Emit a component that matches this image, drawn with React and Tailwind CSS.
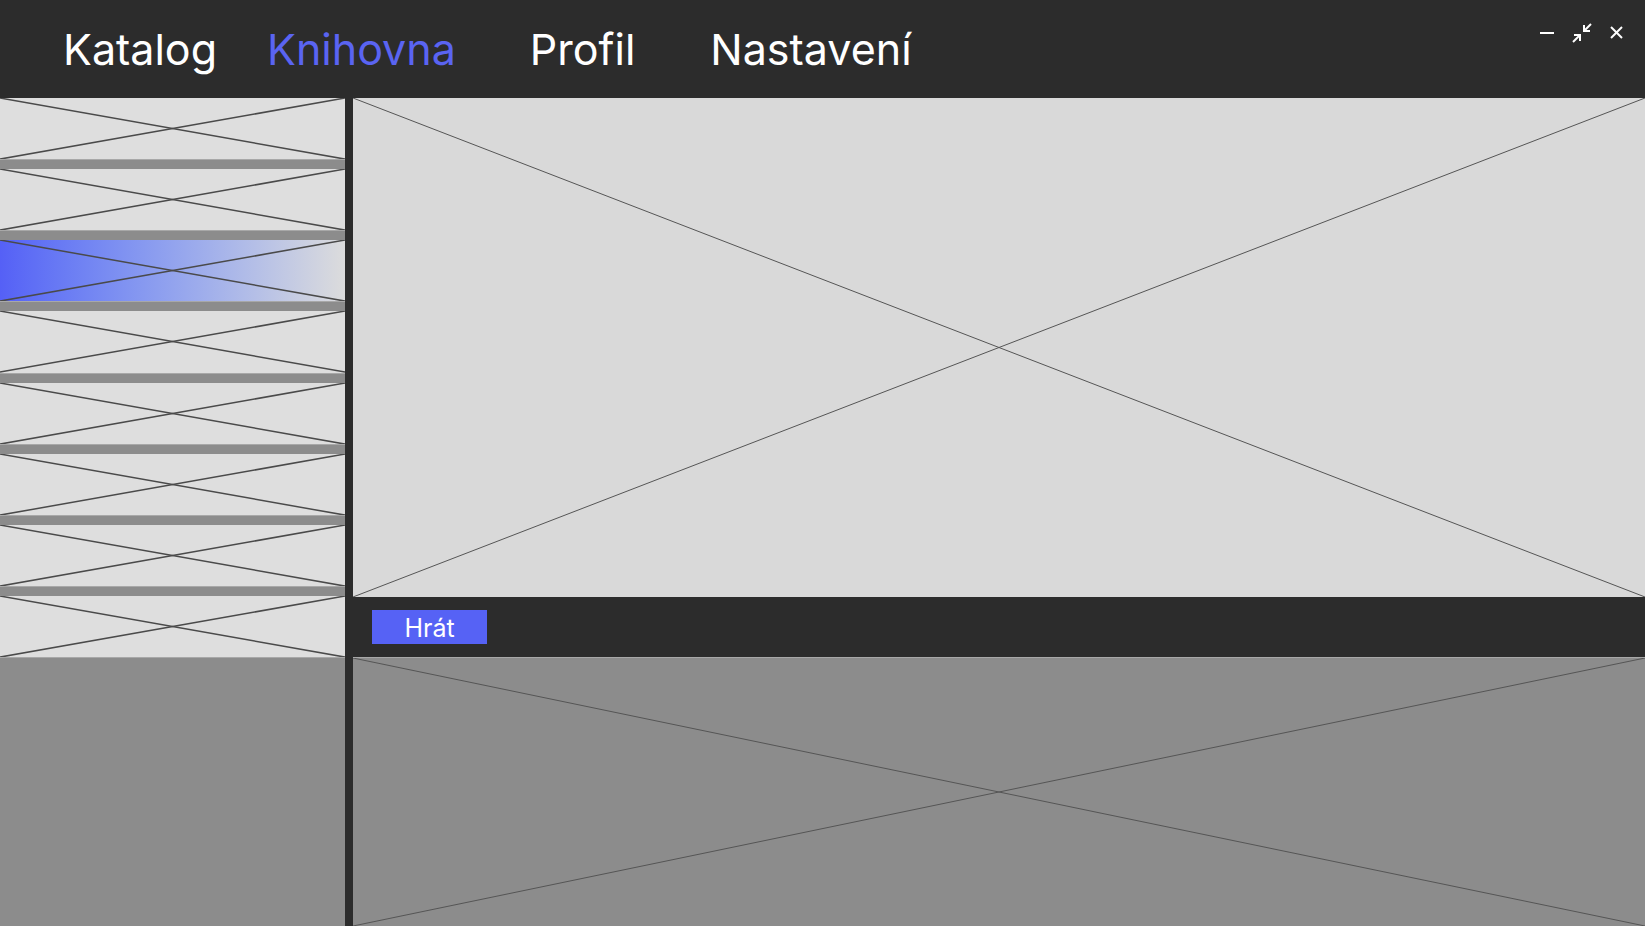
import React from "react";

// Placeholder cross drawn over an image slot
const Cross = ({ stroke = "#555555", width = 1 }) => (
    <svg className="absolute inset-0 w-full h-full" preserveAspectRatio="none" viewBox="0 0 100 100">
        <line x1="0" y1="0" x2="100" y2="100" stroke={stroke} strokeWidth={width} vectorEffect="non-scaling-stroke" />
        <line x1="100" y1="0" x2="0" y2="100" stroke={stroke} strokeWidth={width} vectorEffect="non-scaling-stroke" />
    </svg>
);

const games = [0, 1, 2, 3, 4, 5, 6, 7];

const App = () => {
    const selected = 2;

    return (
        <div className="w-[1645px] h-[926px] flex flex-col bg-[#2c2c2c] overflow-hidden" style={{ fontFamily: "Inter, 'Liberation Sans', sans-serif" }}>
            {/* Top navigation */}
            <div className="h-[98px] flex items-start relative shrink-0">
                <nav className="flex items-center h-[98px] text-[43px] text-white pl-[63px]">
                    <span>Katalog</span>
                    <span className="ml-[50px] text-[#5a64f2]">Knihovna</span>
                    <span className="ml-[74px]">Profil</span>
                    <span className="ml-[75px]">Nastavení</span>
                </nav>

                {/* Window controls */}
                <div className="absolute top-[22px] left-[1538px] flex items-center">
                    <svg width="18" height="22" viewBox="0 0 18 22">
                        <line x1="2" y1="11" x2="16" y2="11" stroke="white" strokeWidth="2" />
                    </svg>
                    <svg className="ml-[15px]" width="22" height="22" viewBox="0 0 22 22">
                        <g stroke="white" strokeWidth="2" fill="none">
                            <polyline points="3,13 9,13 9,19" />
                            <line x1="2" y1="20" x2="9" y2="13" />
                            <polyline points="13,3 13,9 19,9" />
                            <line x1="20" y1="2" x2="13" y2="9" />
                        </g>
                    </svg>
                    <svg className="ml-[16px]" width="16" height="22" viewBox="0 0 16 22">
                        <g stroke="white" strokeWidth="2">
                            <line x1="2" y1="5" x2="13" y2="16" />
                            <line x1="13" y1="5" x2="2" y2="16" />
                        </g>
                    </svg>
                </div>
            </div>

            <div className="flex flex-1 min-h-0">
                {/* Library list */}
                <div className="w-[345px] flex flex-col">
                    {games.map((g, i) => (
                        <React.Fragment key={g}>
                            {i > 0 && <div className="h-[10px] bg-[#8c8c8c] border-t border-[#a8a8a8] shrink-0" />}
                            <div
                                className={
                                    i === selected
                                        ? "relative h-[61.125px] shrink-0 bg-gradient-to-r from-[#5560f6] to-[#dcdcdc]"
                                        : "relative h-[61.125px] shrink-0 bg-[#dedede]"
                                }
                            >
                                <Cross stroke="#4a4a4a" width={1.5} />
                            </div>
                        </React.Fragment>
                    ))}
                    <div className="flex-1 bg-[#8c8c8c] border-t border-[#a8a8a8]" />
                </div>

                <div className="w-[8px] bg-[#2c2c2c] shrink-0" />

                {/* Detail */}
                <div className="flex-1 flex flex-col">
                    <div className="relative h-[499px] bg-[#d9d9d9] shrink-0">
                        <Cross stroke="#555555" width={1} />
                    </div>
                    <div className="h-[60px] flex items-center pl-[19px] shrink-0">
                        <button className="w-[115px] h-[34px] pt-[2px] bg-[#5662f5] text-white text-[25px] leading-none">
                            Hrát
                        </button>
                    </div>
                    <div className="relative flex-1 bg-[#8c8c8c] border-t border-[#a8a8a8]">
                        <Cross stroke="#555555" width={1} />
                    </div>
                </div>
            </div>
        </div>
    );
};

export default App;
